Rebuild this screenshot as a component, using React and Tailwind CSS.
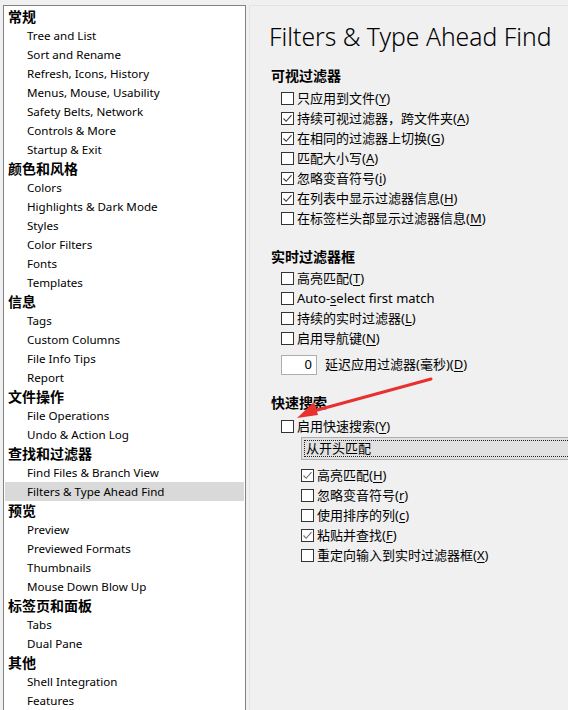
import React from "react"

const TREE = [
  { h: "常规" },
  { t: "Tree and List" },
  { t: "Sort and Rename" },
  { t: "Refresh, Icons, History" },
  { t: "Menus, Mouse, Usability" },
  { t: "Safety Belts, Network" },
  { t: "Controls & More" },
  { t: "Startup & Exit" },
  { h: "颜色和风格" },
  { t: "Colors" },
  { t: "Highlights & Dark Mode" },
  { t: "Styles" },
  { t: "Color Filters" },
  { t: "Fonts" },
  { t: "Templates" },
  { h: "信息" },
  { t: "Tags" },
  { t: "Custom Columns" },
  { t: "File Info Tips" },
  { t: "Report" },
  { h: "文件操作" },
  { t: "File Operations" },
  { t: "Undo & Action Log" },
  { h: "查找和过滤器" },
  { t: "Find Files & Branch View" },
  { t: "Filters & Type Ahead Find", sel: true },
  { h: "预览" },
  { t: "Preview" },
  { t: "Previewed Formats" },
  { t: "Thumbnails" },
  { t: "Mouse Down Blow Up" },
  { h: "标签页和面板" },
  { t: "Tabs" },
  { t: "Dual Pane" },
  { h: "其他" },
  { t: "Shell Integration" },
  { t: "Features" },
]

const UI_FONT = { fontFamily: '"Noto Sans", "Noto Sans CJK SC", sans-serif' }

function Box({ checked, dim }) {
  return (
    <span className="w-[13px] h-[13px] shrink-0 border border-[#333333] bg-white flex items-center justify-center">
      {checked && (
        <svg width="11" height="11" viewBox="0 0 11 11">
          <path d="M1.5 5.5 L4.2 8.3 L9.5 2.2" fill="none" stroke={dim ? "#6d6d6d" : "#3c3c3c"} strokeWidth="1.1" />
        </svg>
      )}
    </span>
  )
}

function Check({ checked, dim, children }) {
  return (
    <div className="h-[20px] flex items-center gap-[3px] text-[13px] text-black whitespace-nowrap">
      <Box checked={checked} dim={dim} />
      <span className="leading-none">{children}</span>
    </div>
  )
}

function Acc({ k }) {
  return <>(<span className="underline underline-offset-2">{k}</span>)</>
}

export default function App() {
  return (
    <div className="relative w-[568px] h-[710px] overflow-hidden bg-[#f0f0f0] flex pt-[5px] pl-[3px]" style={UI_FONT}>
      {/* tree */}
      <div className="w-[243px] shrink-0 h-[720px] bg-white border border-[#828282] pt-[1px]">
        {TREE.map((r, i) =>
          r.h ? (
            <div key={i} className="h-[19px] flex items-center pl-[4px] text-[14px] font-bold text-black">{r.h}</div>
          ) : (
            <div key={i} className={`h-[19px] mx-[1px] flex items-center pl-[22px] text-[11.6px] text-black ${r.sel ? "bg-[#d9d9d9]" : ""}`}>{r.t}</div>
          )
        )}
      </div>

      {/* page */}
      <div className="ml-[3px] flex-1 h-[720px] border-l border-t border-[#e3e3e3] pl-[19px] pt-[14px]">
        <div className="text-[24.7px] font-light text-black leading-[34px] whitespace-nowrap">Filters &amp; Type Ahead Find</div>

        <div className="mt-[12px] ml-[2px] text-[14px] font-bold leading-[20px]">可视过滤器</div>
        <div className="ml-[12px] mt-[2px]">
          <Check>只应用到文件<Acc k="Y" /></Check>
          <Check checked>持续可视过滤器，跨文件夹<Acc k="A" /></Check>
          <Check checked>在相同的过滤器上切换<Acc k="G" /></Check>
          <Check>匹配大小写<Acc k="A" /></Check>
          <Check checked>忽略变音符号<Acc k="i" /></Check>
          <Check checked>在列表中显示过滤器信息<Acc k="H" /></Check>
          <Check>在标签栏头部显示过滤器信息<Acc k="M" /></Check>
        </div>

        <div className="mt-[19px] ml-[2px] text-[14px] font-bold leading-[20px]">实时过滤器框</div>
        <div className="ml-[12px] mt-[1px]">
          <Check>高亮匹配<Acc k="T" /></Check>
          <Check>Auto-<span className="underline underline-offset-2">s</span>elect first match</Check>
          <Check>持续的实时过滤器<Acc k="L" /></Check>
          <Check>启用导航键<Acc k="N" /></Check>
          <div className="mt-[7px] flex items-center gap-[8px] text-[13px] whitespace-nowrap">
            <span className="w-[36px] h-[20px] bg-white border border-[#adadad] flex items-center justify-end pr-[4px]">0</span>
            <span>延迟应用过滤器(毫秒)<Acc k="D" /></span>
          </div>
        </div>

        <div className="mt-[18px] ml-[2px] text-[14px] font-bold leading-[20px]">快速搜索</div>
        <div className="ml-[12px] mt-[3px]">
          <Check>启用快速搜索<Acc k="Y" /></Check>
          <div className="ml-[20px]">
            <div className="mt-[1px] h-[23px] w-[300px] bg-[#e1e1e1] border border-[#adadad] p-[2px]">
              <div className="h-full border border-dotted border-[#222] flex items-center pl-[1px] text-[13px]">从开头匹配</div>
            </div>
            <div className="mt-[5px]">
              <Check checked dim>高亮匹配<Acc k="H" /></Check>
              <Check>忽略变音符号<Acc k="r" /></Check>
              <Check>使用排序的列<Acc k="c" /></Check>
              <Check checked dim>粘贴并查找<Acc k="F" /></Check>
              <Check>重定向输入到实时过滤器框<Acc k="X" /></Check>
            </div>
          </div>
        </div>
      </div>

      {/* red annotation arrow */}
      <svg className="absolute left-0 top-0 pointer-events-none" width="568" height="710">
        <line x1="431" y1="379" x2="310" y2="412" stroke="#e8302f" strokeWidth="3" strokeLinecap="round" />
        <polygon points="297,418 314,402 318,415" fill="#e8302f" />
      </svg>
    </div>
  )
}
